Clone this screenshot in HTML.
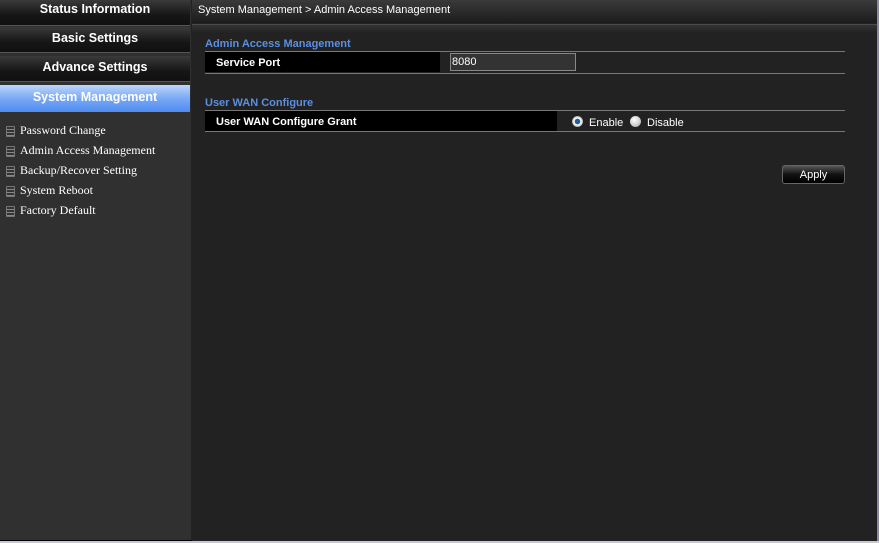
<!DOCTYPE html>
<html><head><meta charset="utf-8"><style>
*{margin:0;padding:0;box-sizing:border-box}
body{width:879px;height:543px;background:#222;position:relative;overflow:hidden;font-family:"Liberation Sans",sans-serif}
#side{position:absolute;left:0;top:0;width:191px;height:541px;background:#303030}
.btn{position:absolute;left:0;width:190px;height:26px;background:linear-gradient(#3a3a3a,#161616 60%,#101010);color:#fff;font-weight:bold;font-size:12.5px;text-align:center;line-height:18px;border-bottom:1px solid #555}
.btn.act{background:linear-gradient(#bcd6fb,#7aa9f5 50%,#4d8cf2);line-height:24px;border:none}
.mi{position:absolute;left:6px;font-family:"Liberation Serif",serif;font-size:12px;color:#fff;height:16px}
.mi i{display:inline-block;width:9px;height:11px;border:1px solid #777;background:repeating-linear-gradient(#333 0 2px,#888 2px 3px);vertical-align:-3px;margin-right:5px;border-radius:1px}
#hdr{position:absolute;left:192px;top:0;width:685px;height:23px;background:linear-gradient(#3a3a3a,#1c1c1c);color:#fff;font-size:11px;line-height:21px;padding-left:6px}
#hdr2{position:absolute;left:192px;top:24px;width:685px;height:9px;background:linear-gradient(#333,#222);border-top:1px solid #4a4a4a}
.st{position:absolute;left:205px;color:#5b8fe0;font-weight:bold;font-size:11px}
.ln{position:absolute;left:205px;width:640px;height:1px;background:#777}
.row{position:absolute;left:205px;height:20px;background:#000;color:#fff;font-weight:bold;font-size:11px;line-height:22px;padding-left:11px}
#inp{position:absolute;left:450px;top:53px;width:126px;height:18px;background:#333;border:1px solid #888;color:#fff;font-size:11px;line-height:16px;padding-left:1px}
.rad{position:absolute;top:116px;width:11px;height:11px;border-radius:50%}
.lbl{position:absolute;top:117px;color:#fff;font-size:11px}
#apply{position:absolute;left:782px;top:165px;width:63px;height:19px;border:1px solid #666;border-radius:3px;background:linear-gradient(#555,#111 50%,#000);color:#fff;font-size:11px;text-align:center;line-height:18px}
#redge{position:absolute;left:877px;top:0;width:2px;height:543px;background:#8a8aa0}
#bot{position:absolute;left:0;top:541px;width:879px;height:2px;background:#c8c8d0}
#bot2{position:absolute;left:0;top:540px;width:192px;height:1px;background:#000}
</style></head><body>
<div id="side">
<div class="btn" style="top:0">Status Information</div>
<div class="btn" style="top:27px;line-height:23px">Basic Settings</div>
<div class="btn" style="top:56px;line-height:23px">Advance Settings</div>
<div class="btn act" style="top:85px;height:27px">System Management</div>
<div class="mi" style="top:123px"><i></i>Password Change</div>
<div class="mi" style="top:143px"><i></i>Admin Access Management</div>
<div class="mi" style="top:163px"><i></i>Backup/Recover Setting</div>
<div class="mi" style="top:183px"><i></i>System Reboot</div>
<div class="mi" style="top:203px"><i></i>Factory Default</div>
</div>
<div id="hdr">System Management &gt; Admin Access Management</div>
<div id="hdr2"></div>
<div class="st" style="top:38px">Admin Access Management</div>
<div class="ln" style="top:51px"></div>
<div class="row" style="top:52px;width:235px">Service Port</div>
<div id="inp">8080</div>
<div class="ln" style="top:73px"></div>
<div class="st" style="top:97px">User WAN Configure</div>
<div class="ln" style="top:110px"></div>
<div class="row" style="top:111px;width:352px">User WAN Configure Grant</div>
<div class="ln" style="top:131px"></div>
<div class="rad" style="left:572px;background:radial-gradient(circle,#1a5fa8 0 2.5px,#fff 3px,#ccc 5px,#888 5.5px)"></div>
<div class="lbl" style="left:589px">Enable</div>
<div class="rad" style="left:630px;background:radial-gradient(circle at 40% 35%,#fff,#ccc 60%,#888)"></div>
<div class="lbl" style="left:647px">Disable</div>
<div id="apply">Apply</div>
<div id="redge"></div>
<div id="bot2"></div>
<div id="bot"></div>
</body></html>
